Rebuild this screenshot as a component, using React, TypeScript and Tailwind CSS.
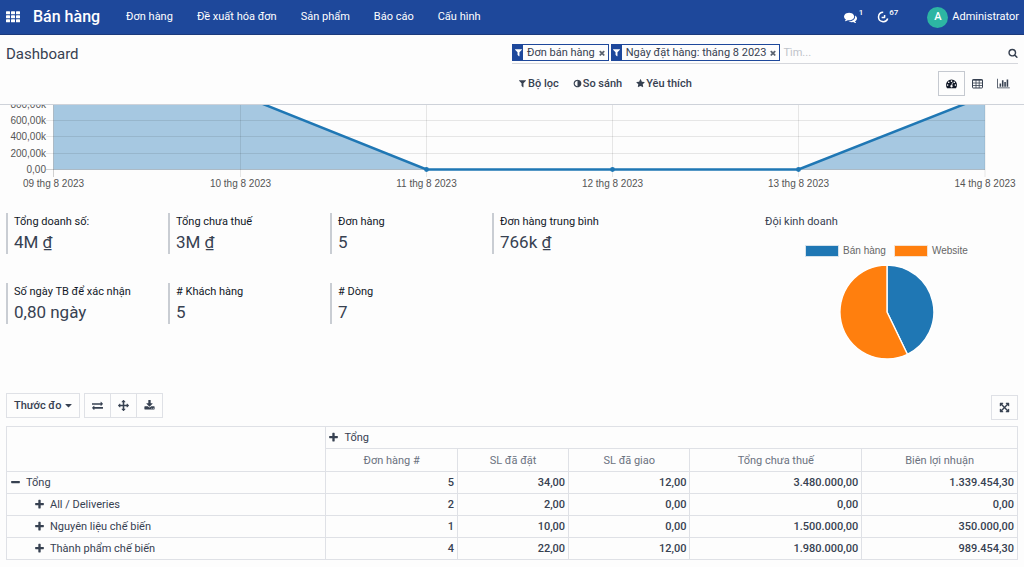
import type { ReactNode } from 'react'

const ICONS = {
  comments:
    'M1408 768q0 139-94 257t-256.5 186.5-353.5 68.5q-86 0-176-16-124 88-278 128-36 9-86 16h-3q-11 0-20.5-8t-11.5-21q-1-3-1-6.5t.5-6.5 2-6l2.5-5 3.5-5.5 4-5 4.5-5 4-4.5q5-6 23-25t26-29.5 22.5-29 25-38.5 20.5-44q-124-72-195-177t-71-224q0-139 94-257t256.5-186.5 353.5-68.5 353.5 68.5 256.5 186.5 94 257zm384 256q0 120-71 224.5t-195 176.5q10 24 20.5 44t25 38.5 22.5 29 26 29.5 23 25q1 1 4 4.5t4.5 5 4 5 3.5 5.5l2.5 5 2 6 .5 6.5-1 6.5q-3 14-13 22t-22 7q-50-7-86-16-154-40-278-128-90 16-176 16-271 0-472-132 58 4 88 4 161 0 309-45t264-129q125-92 192-212t67-254q0-77-23-152 129 71 204 178t75 230z',
  filter:
    'M1595 295q17 41-14 70l-493 493v742q0 42-39 59-13 5-25 5-27 0-45-19l-256-256q-19-19-19-45v-486l-493-493q-31-29-14-70 17-39 59-39h1280q42 0 59 39z',
  adjust:
    'M896 1440v-1088q-148 0-273 73t-198 198-73 273 73 273 198 198 273 73zm768-544q0 209-103 385.5t-279.5 279.5-385.5 103-385.5-103-279.5-279.5-103-385.5 103-385.5 279.5-279.5 385.5-103 385.5 103 279.5 279.5 103 385.5z',
  star: 'M1728 647q0 22-26 48l-363 354 86 500q1 7 1 20 0 21-10.5 35.5t-30.5 14.5q-19 0-40-12l-449-236-449 236q-22 12-40 12-21 0-31.5-14.5t-10.5-35.5q0-6 2-20l86-500-364-354q-25-27-25-48 0-37 56-46l502-73 225-455q19-41 49-41t49 41l225 455 502 73q56 9 56 46z',
  search:
    'M1216 832q0-185-131.5-316.5t-316.5-131.5-316.5 131.5-131.5 316.5 131.5 316.5 316.5 131.5 316.5-131.5 131.5-316.5zm512 832q0 52-38 90t-90 38q-54 0-90-38l-343-342q-179 124-399 124-143 0-273.5-55.5t-225-150-150-225-55.5-273.5 55.5-273.5 150-225 225-150 273.5-55.5 273.5 55.5 225 150 150 225 55.5 273.5q0 220-124 399l343 343q37 37 37 90z',
  times:
    'M1490 1322q0 40-28 68l-136 136q-28 28-68 28t-68-28l-294-294-294 294q-28 28-68 28t-68-28l-136-136q-28-28-28-68t28-68l294-294-294-294q-28-28-28-68t28-68l136-136q28-28 68-28t68 28l294 294 294-294q28-28 68-28t68 28l136 136q28 28 28 68t-28 68l-294 294 294 294q28 28 28 68z',
  tachometer:
    'M384 1152q0-53-37.5-90.5t-90.5-37.5-90.5 37.5-37.5 90.5 37.5 90.5 90.5 37.5 90.5-37.5 37.5-90.5zm192-448q0-53-37.5-90.5t-90.5-37.5-90.5 37.5-37.5 90.5 37.5 90.5 90.5 37.5 90.5-37.5 37.5-90.5zm428 481l101-382q6-26-7.5-48.5t-38.5-29.5-48 6.5-30 39.5l-101 382q-60 5-107 43.5t-63 98.5q-20 77 20 146t117 89 146-20 89-117q16-60-6-117t-72-91zm660-33q0-53-37.5-90.5t-90.5-37.5-90.5 37.5-37.5 90.5 37.5 90.5 90.5 37.5 90.5-37.5 37.5-90.5zm-640-640q0-53-37.5-90.5t-90.5-37.5-90.5 37.5-37.5 90.5 37.5 90.5 90.5 37.5 90.5-37.5 37.5-90.5zm448 192q0-53-37.5-90.5t-90.5-37.5-90.5 37.5-37.5 90.5 37.5 90.5 90.5 37.5 90.5-37.5 37.5-90.5zm320 448q0 261-141 483-19 29-54 29h-1402q-35 0-54-29-141-221-141-483 0-182 71-348t191-286 286-191 348-71 348 71 286 191 191 286 71 348z',
  exchange:
    'M1792 1184v192q0 13-9.5 22.5t-22.5 9.5h-1376v192q0 13-9.5 22.5t-22.5 9.5q-12 0-24-10l-319-320q-9-9-9-22 0-14 9-23l320-320q9-9 23-9 13 0 22.5 9.5t9.5 22.5v192h1376q13 0 22.5 9.5t9.5 22.5zm0-544q0 14-9 23l-320 320q-9 9-23 9-13 0-22.5-9.5t-9.5-22.5v-192h-1376q-13 0-22.5-9.5t-9.5-22.5v-192q0-13 9.5-22.5t22.5-9.5h1376v-192q0-14 9-23t23-9q12 0 24 10l319 319q9 9 9 23z',
  arrows:
    'M1792 896q0 26-19 45l-256 256q-19 19-45 19t-45-19-19-45v-128h-384v384h128q26 0 45 19t19 45-19 45l-256 256q-19 19-45 19t-45-19l-256-256q-19-19-19-45t19-45 45-19h128v-384h-384v128q0 26-19 45t-45 19-45-19l-256-256q-19-19-19-45t19-45l256-256q19-19 45-19t45 19 19 45v128h384v-384h-128q-26 0-45-19t-19-45 19-45l256-256q19-19 45-19t45 19l256 256q19 19 19 45t-19 45-45 19h-128v384h384v-128q0-26 19-45t45-19 45 19l256 256q19 19 19 45z',
  download:
    'M1344 1344q0-26-19-45t-45-19-45 19-19 45 19 45 45 19 45-19 19-45zm256 0q0-26-19-45t-45-19-45 19-19 45 19 45 45 19 45-19 19-45zm128-224v320q0 40-28 68t-68 28h-1472q-40 0-68-28t-28-68v-320q0-40 28-68t68-28h465l135 136q58 56 136 56t136-56l136-136h464q40 0 68 28t28 68zm-325-569q17 41-14 70l-448 448q-18 19-45 19t-45-19l-448-448q-31-29-14-70 17-39 59-39h256v-448q0-26 19-45t45-19h256q26 0 45 19t19 45v448h256q42 0 59 39z',
  expand:
    'M1411 541l-355 355 355 355 144-144q29-31 70-14 39 17 39 59v448q0 26-19 45t-45 19h-448q-42 0-59-40-17-39 14-69l144-144-355-355-355 355 144 144q31 30 14 69-17 40-59 40h-448q-26 0-45-19t-19-45v-448q0-42 40-59 39-17 69 14l144 144 355-355-355-355-144 144q-19 19-45 19-12 0-24-5-40-17-40-59v-448q0-26 19-45t45-19h448q42 0 59 40 17 39-14 69l-144 144 355 355 355-355-144-144q-31-30-14-69 17-40 59-40h448q26 0 45 19t19 45v448q0 42-39 59-13 5-25 5-26 0-45-19z',
  plus: 'M1600 736v192q0 40-28 68t-68 28h-416v416q0 40-28 68t-68 28h-192q-40 0-68-28t-28-68v-416h-416q-40 0-68-28t-28-68v-192q0-40 28-68t68-28h416v-416q0-40 28-68t68-28h192q40 0 68 28t28 68v416h416q40 0 68 28t28 68z',
  minus:
    'M1600 736v192q0 40-28 68t-68 28h-1216q-40 0-68-28t-28-68v-192q0-40 28-68t68-28h1216q40 0 68 28t28 68z',
  caret: 'M1408 704q0 26-19 45l-448 448q-19 19-45 19t-45-19l-448-448q-19-19-19-45t19-45 45-19h896q26 0 45 19t19 45z',
}

function Icon({ name, className }: { name: keyof typeof ICONS; className: string }) {
  return (
    <svg aria-hidden viewBox="0 0 1792 1792" fill="currentColor" className={`shrink-0 ${className}`}>
      <path d={ICONS[name]} />
    </svg>
  )
}

const MENU = ['Đơn hàng', 'Đề xuất hóa đơn', 'Sản phẩm', 'Báo cáo', 'Cấu hình']

function Navbar() {
  return (
    <header className="flex h-[35px] items-center border-b border-[#1b3a7c] bg-[#1e489b] text-[11px] text-white">
      <button type="button" aria-label="Ứng dụng" className="ml-[6px]">
        <svg aria-hidden viewBox="0 0 14 12" fill="currentColor" className="h-3 w-[14px]">
          {[0, 5, 10].map((x) =>
            [0, 4, 8].map((y) => <rect key={`${x}-${y}`} x={x} y={y + 0.3} width="4" height="3" rx="0.5" />),
          )}
        </svg>
      </button>
      <a href="#" className="mr-[14px] ml-[13px] text-[16px] font-medium">
        Bán hàng
      </a>
      <nav className="flex">
        {MENU.map((item) => (
          <a key={item} href="#" className="px-3">
            {item}
          </a>
        ))}
      </nav>
      <div className="ml-auto flex items-center pr-[5px]">
        <button type="button" aria-label="Tin nhắn" className="flex items-center">
          <Icon name="comments" className="size-[13px]" />
          <span className="mb-2 ml-[2px] text-[8px] leading-none font-medium">1</span>
        </button>
        <button type="button" aria-label="Hoạt động" className="ml-[14px] flex items-center">
          <svg
            aria-hidden
            viewBox="0 0 12 12"
            fill="none"
            stroke="currentColor"
            strokeWidth="1.5"
            className="size-3"
          >
            <path d="M6.2 1.3a4.7 4.7 0 1 0 4.5 6.2M4.6 6.6h3.2M7.6 4v2.8" />
          </svg>
          <span className="mb-2 text-[8px] leading-none font-medium">67</span>
        </button>
        <button type="button" className="ml-[29px] flex items-center gap-1">
          <span className="flex size-[21px] items-center justify-center rounded-full bg-[#2db5a3] font-medium">
            A
          </span>
          Administrator
        </button>
      </div>
    </header>
  )
}

function Facet({ children }: { children: string }) {
  return (
    <div className="flex h-[17px] shrink-0 items-center border border-[#1e489b] pr-[2px] leading-[15px]">
      <span className="flex h-full w-[10px] items-center justify-center bg-[#1e489b] text-white">
        <Icon name="filter" className="size-[9px]" />
      </span>
      <span className="pl-1">{children}</span>
      <button type="button" aria-label={`Xóa ${children}`} className="ml-[3px] text-[#5b6370]">
        <Icon name="times" className="size-[8px]" />
      </button>
    </div>
  )
}

function ControlPanel() {
  return (
    <div className="grid grid-cols-2 border-b border-[#ced2d9] pt-[9px] pb-2">
      <h1 className="pl-[6px] text-[15px] leading-5">Dashboard</h1>
      <div className="pr-[6px]">
        <div className="flex h-5 items-start gap-[2px] border-b border-[#d5d7dc] text-[11px]">
          <Facet>Đơn bán hàng</Facet>
          <Facet>Ngày đặt hàng: tháng 8 2023</Facet>
          <input
            type="text"
            aria-label="Tìm kiếm"
            placeholder="Tìm..."
            className="h-[17px] min-w-0 flex-1 pl-px outline-none placeholder:text-[#bfc3ca]"
          />
          <button type="button" aria-label="Tìm" className="flex h-[17px] items-center">
            <Icon name="search" className="size-[10px]" />
          </button>
        </div>
        <div className="mt-[7px] flex h-[25px] items-center text-[11px] leading-[17px] font-medium">
          <div className="flex items-center gap-[14px] pl-[6px]">
            <button type="button" className="flex items-center gap-px">
              <Icon name="filter" className="size-[9px]" />
              Bộ lọc
            </button>
            <button type="button" className="flex items-center gap-px">
              <Icon name="adjust" className="size-[9px]" />
              So sánh
            </button>
            <button type="button" className="flex items-center gap-px">
              <Icon name="star" className="size-[9px]" />
              Yêu thích
            </button>
          </div>
          <div className="mr-[2px] ml-auto flex h-full">
            <button
              type="button"
              aria-label="Dashboard"
              className="flex w-[27px] items-center justify-center border border-[#c5c9d0] text-[#111827]"
            >
              <Icon name="tachometer" className="size-[11px]" />
            </button>
            <button type="button" aria-label="Pivot" className="flex w-[25px] items-center justify-center">
              <svg aria-hidden viewBox="0 0 11 10" fill="none" stroke="currentColor" className="h-[10px] w-[11px]">
                <rect x="0.5" y="0.5" width="10" height="8.5" rx="0.6" />
                <path d="M0.5 1.3h10M0.5 4h10M0.5 6.5h10M4 1v8M7.2 1v8" strokeWidth="0.8" />
              </svg>
            </button>
            <button type="button" aria-label="Biểu đồ" className="flex w-[26px] items-center justify-center">
              <svg aria-hidden viewBox="0 0 2048 1792" fill="currentColor" className="h-[11px] w-[13px]">
                <path d="M640 896v512h-256v-512h256zm384-512v1024h-256v-1024h256zm1024 1152v128h-2048v-1536h128v1408h1920zm-640-896v768h-256v-768h256zm384-384v1152h-256v-1152h256z" />
              </svg>
            </button>
          </div>
        </div>
      </div>
    </div>
  )
}

const DAYS = [
  { x: 53.5, label: '09 thg 8 2023' },
  { x: 240.5, label: '10 thg 8 2023' },
  { x: 426.5, label: '11 thg 8 2023' },
  { x: 612.5, label: '12 thg 8 2023' },
  { x: 798.5, label: '13 thg 8 2023' },
  { x: 985, label: '14 thg 8 2023' },
]

const TICKS = [
  { y: -1, label: '800,00k' },
  { y: 15.5, label: '600,00k' },
  { y: 31.5, label: '400,00k' },
  { y: 48.5, label: '200,00k' },
  { y: 64.5, label: '0,00' },
]

function SalesChart() {
  return (
    <svg
      viewBox="0 0 1024 90"
      className="block w-full overflow-hidden font-['Liberation_Sans',Arial,sans-serif] text-[10px]"
    >
      <path d="M53.5 -60L240.5 -10L426.5 64.5H798.5L985 -9V64.5H53.5z" fill="#a6c8e1" />
      <g stroke="#000" strokeOpacity="0.09">
        {TICKS.map((t) => (
          <path key={t.label} d={`M46 ${t.y}H985`} />
        ))}
        {DAYS.map((d) => (
          <path key={d.label} d={`M${d.x} 0V72`} />
        ))}
        <path d="M53.5 0V72M46 64.5H985" />
      </g>
      <path d="M53.5 -60L240.5 -10L426.5 64.5H798.5L985 -9" fill="none" stroke="#1f77b4" strokeWidth="2.5" />
      {DAYS.slice(2, 5).map((d) => (
        <circle key={d.label} cx={d.x} cy="64.5" r="2.4" fill="#1f77b4" />
      ))}
      <g fill="#555">
        {TICKS.map((t) => (
          <text key={t.label} x="46" y={t.y + 3.5} textAnchor="end">
            {t.label}
          </text>
        ))}
        {DAYS.map((d) => (
          <text key={d.label} x={d.x} y="82" textAnchor="middle">
            {d.label}
          </text>
        ))}
      </g>
    </svg>
  )
}

const STATS = [
  { label: 'Tổng doanh số:', value: '4M ₫' },
  { label: 'Tổng chưa thuế', value: '3M ₫' },
  { label: 'Đơn hàng', value: '5' },
  { label: 'Đơn hàng trung bình', value: '766k ₫' },
  { label: 'Số ngày TB để xác nhận', value: '0,80 ngày' },
  { label: '# Khách hàng', value: '5' },
  { label: '# Dòng', value: '7' },
]

function Stats() {
  return (
    <dl className="grid flex-[3] auto-rows-max grid-cols-[repeat(auto-fill,162px)] gap-y-[29px]">
      {STATS.map((s) => (
        <div key={s.label} className="border-l-2 border-[#c9cdd3] pl-[6px]">
          <dt className="text-[11px] leading-[17px] text-[#111827]">{s.label}</dt>
          <dd className="text-[17px] leading-6">{s.value}</dd>
        </div>
      ))}
    </dl>
  )
}

function TeamPie() {
  return (
    <section className="flex-1">
      <h2 className="text-[11px] leading-[17px]">Đội kinh doanh</h2>
      <div className="mt-[13px] pr-[10px]">
        <div className="flex items-center justify-center gap-2 font-['Liberation_Sans',Arial,sans-serif] text-[10px] leading-4 text-[#666]">
          <span className="flex items-center gap-1">
            <span className="h-3 w-[34px] border border-[#d5e2ec] bg-[#1f77b4]" />
            Bán hàng
          </span>
          <span className="flex items-center gap-1">
            <span className="h-3 w-[34px] border border-[#f5e3d3] bg-[#ff7f0e]" />
            Website
          </span>
        </div>
        <svg aria-hidden viewBox="-48 -48 96 96" className="mx-auto mt-[5px] size-24">
          <g stroke="#fff" strokeWidth="1.4">
            <path d="M0 0V-47A47 47 0 0 1 20.4 42.3z" fill="#1f77b4" />
            <path d="M0 0L20.4 42.3A47 47 0 1 1 0 -47z" fill="#ff7f0e" />
          </g>
        </svg>
      </div>
    </section>
  )
}

function ToolButton({ label, children }: { label: string; children: ReactNode }) {
  return (
    <button
      type="button"
      aria-label={label}
      className="-ml-px flex h-[25px] w-[27px] items-center justify-center border border-[#dfe1e6]"
    >
      {children}
    </button>
  )
}

function Toolbar() {
  return (
    <div className="flex items-start">
      <button
        type="button"
        className="flex h-[25px] items-center gap-[2px] border border-[#dfe1e6] pr-[5px] pl-[7px] text-[11px] leading-[17px] font-medium"
      >
        Thước đo
        <Icon name="caret" className="size-[11px]" />
      </button>
      <div className="ml-[5px] flex">
        <ToolButton label="Đảo trục">
          <Icon name="exchange" className="size-[11px]" />
        </ToolButton>
        <ToolButton label="Mở rộng tất cả">
          <Icon name="arrows" className="size-[11px]" />
        </ToolButton>
        <ToolButton label="Tải xuống">
          <Icon name="download" className="size-[11px]" />
        </ToolButton>
      </div>
      <div className="mt-[2px] ml-auto">
        <ToolButton label="Toàn màn hình">
          <Icon name="expand" className="size-[11px]" />
        </ToolButton>
      </div>
    </div>
  )
}

const MEASURES = ['Đơn hàng #', 'SL đã đặt', 'SL đã giao', 'Tổng chưa thuế', 'Biên lợi nhuận']

const ROWS = [
  { name: 'Tổng', open: true, values: ['5', '34,00', '12,00', '3.480.000,00', '1.339.454,30'] },
  { name: 'All / Deliveries', open: false, values: ['2', '2,00', '0,00', '0,00', '0,00'] },
  { name: 'Nguyên liệu chế biến', open: false, values: ['1', '10,00', '0,00', '1.500.000,00', '350.000,00'] },
  { name: 'Thành phẩm chế biến', open: false, values: ['4', '22,00', '12,00', '1.980.000,00', '989.454,30'] },
]

function PivotTable() {
  return (
    <table className="mt-[6px] w-full table-fixed border-collapse text-[11px] leading-[17px] [&_td]:border [&_td]:border-[#dfe1e6] [&_th]:border [&_th]:border-[#dfe1e6]">
      <colgroup>
        <col className="w-[31.6%]" />
        <col className="w-[13%]" />
        <col className="w-[11%]" />
        <col className="w-[12%]" />
        <col className="w-[17%]" />
        <col />
      </colgroup>
      <thead>
        <tr className="h-[22px]">
          <td rowSpan={2} />
          <th colSpan={5} scope="colgroup" className="px-[2px] py-0 text-left font-normal">
            <button type="button" className="flex items-center gap-[5px]">
              <Icon name="plus" className="size-[11px]" />
              Tổng
            </button>
          </th>
        </tr>
        <tr className="h-[23px]">
          {MEASURES.map((m) => (
            <th key={m} scope="col" className="p-0 font-normal text-[#6b7280]">
              {m}
            </th>
          ))}
        </tr>
      </thead>
      <tbody>
        {ROWS.map((row) => (
          <tr key={row.name} className="h-[22px]">
            <th scope="row" className={`py-0 text-left font-normal ${row.open ? 'pl-[3px]' : 'pl-[27px]'}`}>
              <button type="button" className="flex items-center gap-[5px]">
                <Icon name={row.open ? 'minus' : 'plus'} className="size-[11px]" />
                {row.name}
              </button>
            </th>
            {row.values.map((v, i) => (
              <td key={MEASURES[i]} className="px-[3px] py-0 text-right font-medium">
                {v}
              </td>
            ))}
          </tr>
        ))}
      </tbody>
    </table>
  )
}

export default function App() {
  return (
    <div className="min-h-screen bg-[#fdfdfd] font-[Roboto,'Noto_Sans',sans-serif] text-[#374151]">
      <Navbar />
      <ControlPanel />
      <main>
        <SalesChart />
        <div className="px-[6px] pt-[18px]">
          <div className="flex">
            <Stats />
            <TeamPie />
          </div>
          <div className="mt-[33px]">
            <Toolbar />
            <PivotTable />
          </div>
        </div>
      </main>
    </div>
  )
}
